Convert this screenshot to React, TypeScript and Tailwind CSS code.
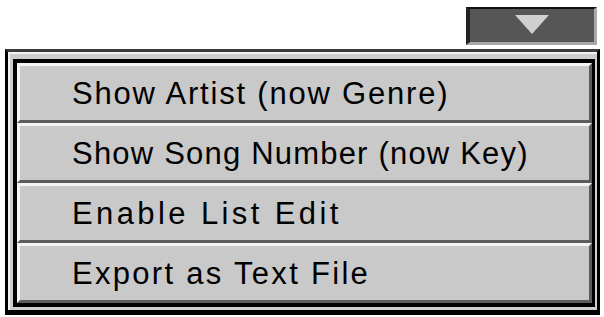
import React from 'react';

const items = [
  { label: 'Show Artist (now Genre)', tracking: 'tracking-[1.8px]' },
  { label: 'Show Song Number (now Key)', tracking: 'tracking-[1.2px]' },
  { label: 'Enable List Edit', tracking: 'tracking-[3.4px]' },
  { label: 'Export as Text File', tracking: 'tracking-[2.3px]' },
];

export default function App() {
  return (
    <div className="w-[604px] h-[317px] bg-white pt-[7px] overflow-hidden">
      {/* Dropdown button */}
      <div className="flex justify-end pr-[7px]">
        <div className="w-[131px] h-[38px] bg-[#565656] border-t-[2px] border-l-[4px] border-t-[#111] border-l-[#222] border-r-[3px] border-r-[#aaa] border-b-[3px] border-b-[#a8a8a8] flex justify-center pt-[6px]">
          <svg width="34" height="19" viewBox="0 0 34 19">
            <polygon points="0,0 34,0 17,19" fill="#cfcfcf" />
          </svg>
        </div>
      </div>

      {/* Menu */}
      <div className="mt-[4px] ml-[5px] w-[595px] h-[266px] bg-[#cdcdcd] border-l-[3px] border-r-[3px] border-t-[3px] border-b-[5px] border-l-black border-r-black border-t-[#3a3a3a] border-b-black pl-[5px] pr-[2px] pt-[7px] pb-[3px] shadow-[inset_2px_2px_0_#f2f2f2]">
        <div className="h-full border-t-[4px] border-l-[4px] border-b-[4px] border-r-[3px] border-black flex flex-col">
          {items.map((item) => (
            <div
              key={item.label}
              className="h-[60px] flex items-center bg-[#c9c9c9] border-t-[3px] border-l-[3px] border-t-[#f4f4f4] border-l-[#f4f4f4] border-b-[3px] border-r-[3px] border-b-[#5c5c5c] border-r-[#5c5c5c] pl-[52px]"
            >
              <span className={`text-[31px] leading-none text-black font-['Liberation_Sans',sans-serif] ${item.tracking}`}>
                {item.label}
              </span>
            </div>
          ))}
        </div>
      </div>
    </div>
  );
}
